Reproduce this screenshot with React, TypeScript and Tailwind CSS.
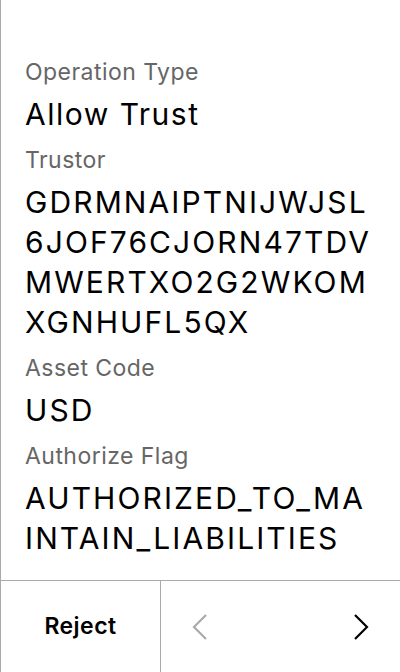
import React from "react";

const Field = ({ label, value, wide = true }: { label: string; value: string; wide?: boolean }) => (
  <div className="flex flex-col">
    <div className="text-[23px] leading-[30px] tracking-[0.02em] text-[#666666]">{label}</div>
    <div
      className={
        "mt-[7px] mb-[11px] text-[30px] leading-[40px] text-black break-all " +
        (wide ? "tracking-[0.07em]" : "tracking-[0.05em]")
      }
    >
      {value}
    </div>
  </div>
);

const App = () => {
  return (
    <div
      className="flex flex-col h-[672px] w-[400px] bg-white border-l border-[#aaaaaa]"
      style={{ fontFamily: "Inter, 'Noto Sans', sans-serif" }}
    >
      <div className="flex flex-col grow pt-[57px] pl-6 pr-[27px]">
        <Field label="Operation Type" value="Allow Trust" wide={false} />
        <Field label="Trustor" value="GDRMNAIPTNIJWJSL6JOF76CJORN47TDVMWERTXO2G2WKOMXGNHUFL5QX" />
        <Field label="Asset Code" value="USD" />
        <Field label="Authorize Flag" value="AUTHORIZED_TO_MAINTAIN_LIABILITIES" />
      </div>
      <div className="flex h-[92px] border-t border-[#aaaaaa]">
        <button className="w-[160px] flex items-center justify-center border-r border-[#aaaaaa] text-[23px] font-semibold tracking-[0.02em] text-black">
          Reject
        </button>
        <div className="flex grow items-center justify-between px-[31px]">
          <svg width="16" height="28" viewBox="0 0 16 28" fill="none" stroke="#aaaaaa" strokeWidth="2.2">
            <path d="M14 2 L2 14 L14 26" />
          </svg>
          <svg width="16" height="28" viewBox="0 0 16 28" fill="none" stroke="#000000" strokeWidth="2.2">
            <path d="M2 2 L14 14 L2 26" />
          </svg>
        </div>
      </div>
    </div>
  );
};

export default App;
